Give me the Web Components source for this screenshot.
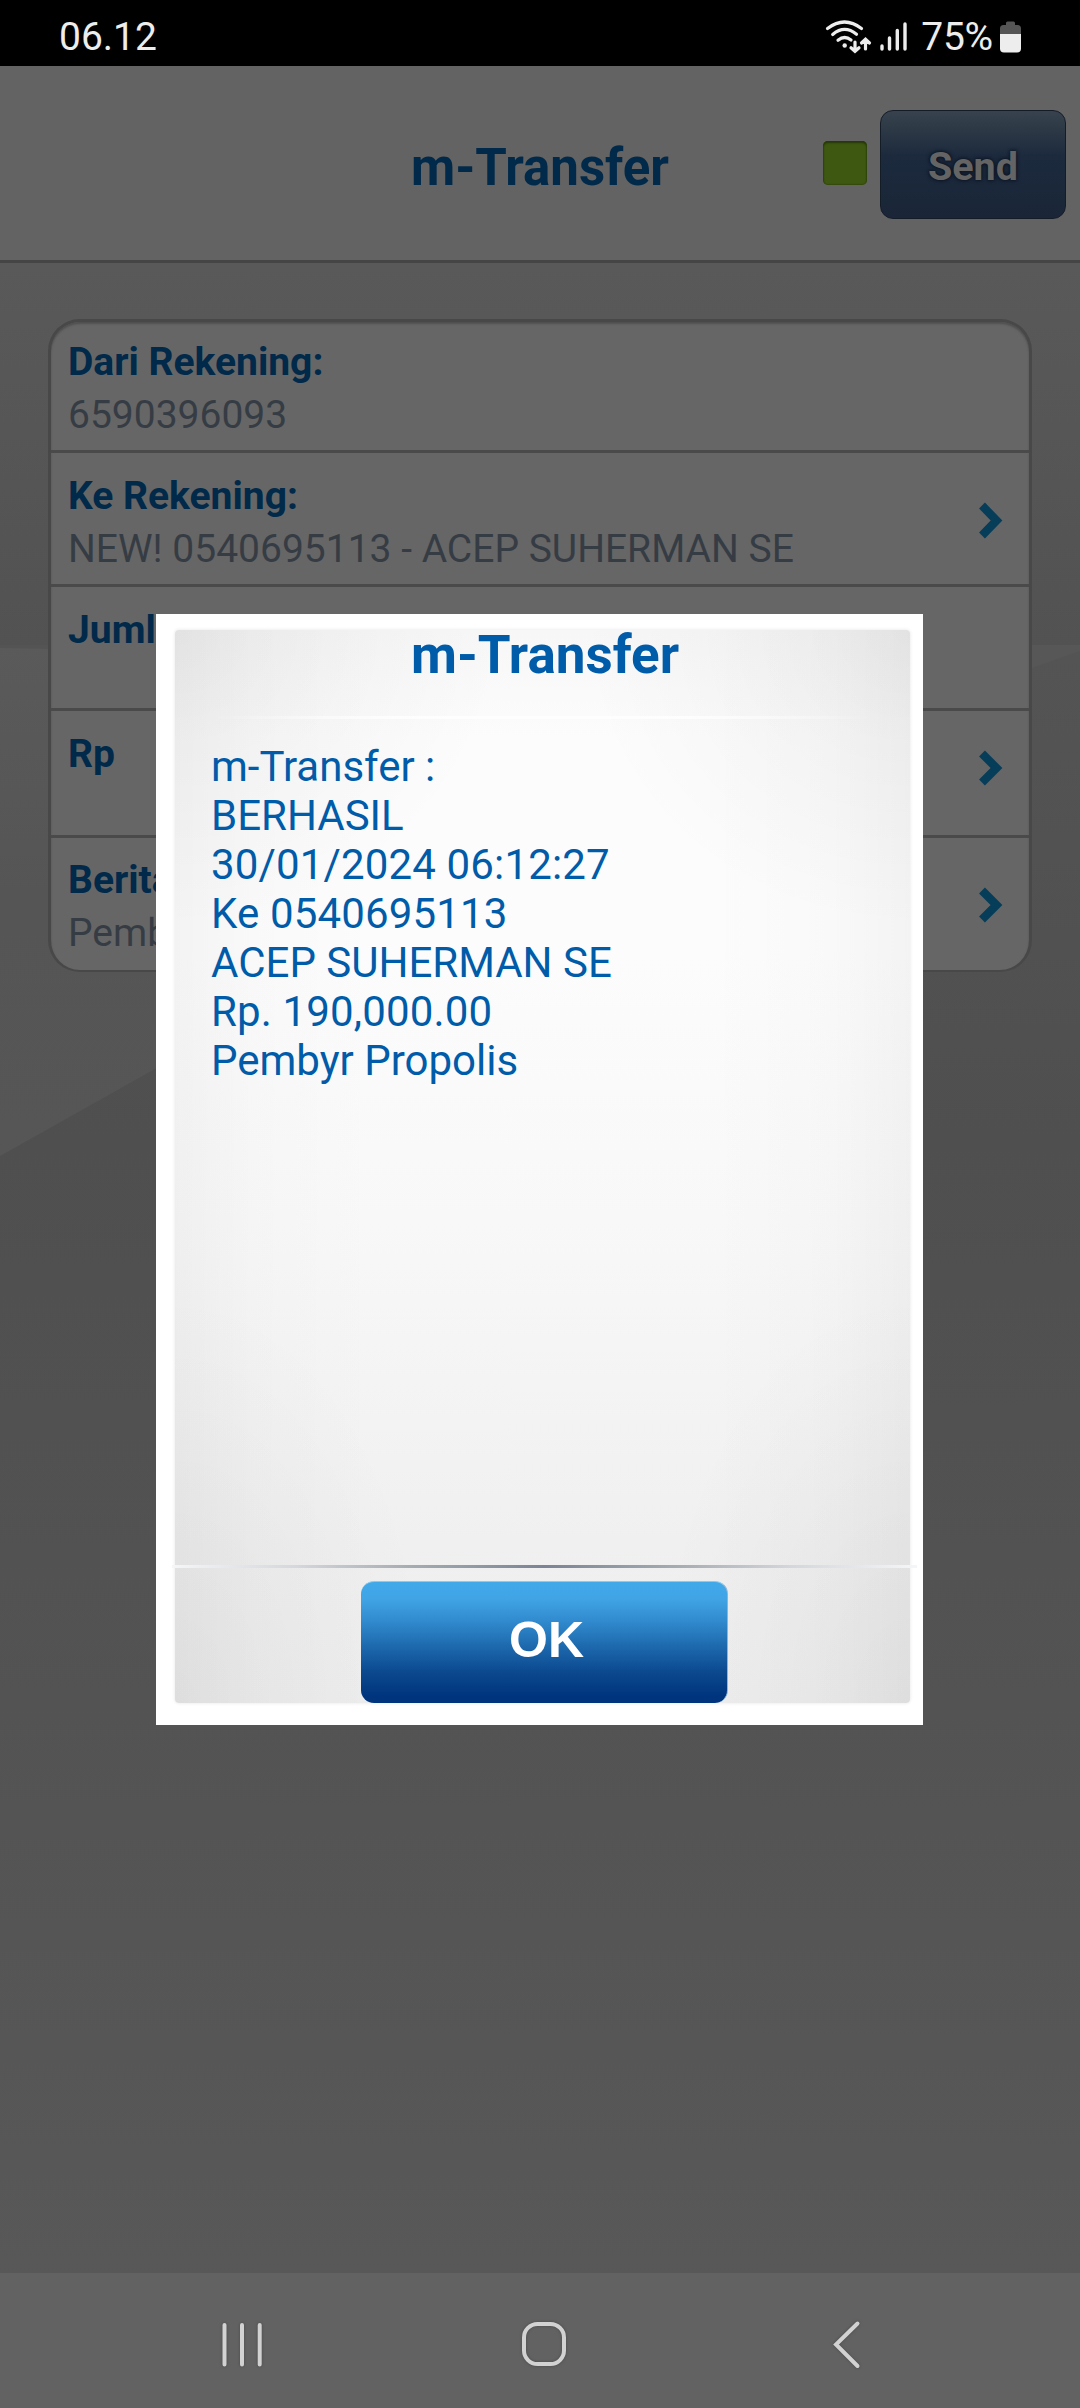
<!DOCTYPE html>
<html lang="id">
<head>
<meta charset="utf-8">
<title>m-Transfer</title>
<style>
html,body{margin:0;padding:0;background:#000}
body{width:1080px;height:2408px;overflow:hidden;font-family:Roboto,"Liberation Sans",sans-serif}
</style>
</head>
<body>
<bank-screen></bank-screen>
<script>
function define(name, html){
  customElements.define(name, class extends HTMLElement{
    constructor(){
      super();
      const t=document.createElement('template');
      t.innerHTML=html;
      this.attachShadow({mode:'open'}).appendChild(t.content.cloneNode(true));
    }
  });
}

define('status-bar', `
<style>
:host{display:flex;height:66px;box-sizing:border-box;background:#000;color:#ededed;align-items:flex-start;justify-content:space-between;padding:0 59px 0 59px;font-size:39px;line-height:46px}
span{display:block;padding-top:14px}
.r{display:flex;align-items:flex-start}
svg{display:block;flex:none}
.p{padding-left:13px;letter-spacing:-.2px}
.b{margin:21px 0 0 7px}
</style>
<span>06.12</span>
<div class="r">
<svg width="86" height="66" viewBox="822 0 86 66" fill="none" stroke="#ededed" stroke-width="3.2" stroke-linecap="round">
<path d="M827.5 28.5Q844.500 15.500 861.5 28.500"/><path d="M832.700 34.500Q844.500 24.500 856.500 34.300"/><path d="M838 40.300Q844.500 34.800 851 40"/>
<circle cx="844.700" cy="45.500" r="2.200" fill="#ededed" stroke="none"/>
<path d="M855 42V50.500M851 47.800L855 51.400L859 47.800M865.500 49V40.500M861.500 43L865.500 39.300L869.500 43"/>
<g stroke-width="3.400"><path d="M882 46V49M889.500 38V49M897.300 30.500V49M905 24V49"/></g></svg>
<span class="p">75%</span>
<svg class="b" width="21" height="32" viewBox="0 0 21 32"><path d="M6 4V2Q6 .5 7.500 .5H13.500Q15 .5 15 2V4H17.500Q21 4 21 7.500V14H0V7.500Q0 4 3.500 4Z" fill="#555"/><path d="M0 13H21V27.500Q21 31.500 17 31.500H4Q0 31.500 0 27.500Z" fill="#ededed"/></svg>
</div>`);

define('top-bar', `
<style>
:host{display:grid;grid-template-columns:411px 1fr auto auto;height:197px;box-sizing:border-box;border-bottom:3px solid #454545;background:#636363}
h1{margin:0;grid-column:2;font-size:51px;line-height:60px;color:#00294a;font-weight:700;padding-top:72px;white-space:nowrap}
.led{width:44px;height:44px;box-sizing:border-box;margin:75px 13px 0 0;border-radius:5px;background:#3e5811;box-shadow:inset 0 2px 2px #25380a,inset 0 0 1px 1px #334b0c}
button{font:700 39.5px/46px Roboto,sans-serif;width:186px;height:109px;margin:44px 14px 0 0;padding:4px 0 0 0;border:1px solid #141c28;border-radius:13px;background:linear-gradient(#37424e 0%,#2b3744 20%,#1c2a3e 42%,#1a2637 100%);color:#646464;text-shadow:0 0 3px #0b1320,0 0 4px #0b1320}
</style>
<h1>m-Transfer</h1><div class="led"></div><button>Send</button>`);

define('form-row', `
<style>
:host{display:flex;box-sizing:border-box;justify-content:space-between;padding:0 25px 0 17px;border-bottom:3px solid #4a4a4a;color:#363c44;font-size:39px;line-height:53px}
:host([last]){border-bottom:0}
.l{display:block;color:#00294a;font-weight:700;white-space:nowrap}
.v{display:block;white-space:nowrap}
.t{padding-top:var(--t,17px)}
svg{display:none;flex:none;width:26px;height:var(--ch,36px);margin-top:var(--c,48px)}
:host([link]) svg{display:block}
</style>
<div class="t"><slot name="label" class="l"></slot><slot class="v"></slot></div>
<svg viewBox="0 0 26 36" preserveAspectRatio="none"><path d="M4 3.500L18.500 18L4 32.500" fill="none" stroke="#063d58" stroke-width="8.300"/></svg>`);

define('form-card', `
<style>
:host{display:block;box-sizing:border-box;width:984px;height:653px;margin:56px 0 0 48px;background:#666;border:3px solid #484848;border-bottom-width:2px;border-radius:32px;box-shadow:inset 0 2px 2px #505050;overflow:hidden}
form-row:nth-of-type(1){height:131px;--t:14px}
form-row:nth-of-type(2){height:134px;--t:17px;--c:49px;--ch:37px}
form-row:nth-of-type(3){height:124px;--t:17px}
form-row:nth-of-type(4){height:127px;--t:17px;--c:39px}
form-row:nth-of-type(5){height:132px;--t:16px;--c:49px}
</style>
<form-row><span slot="label">Dari Rekening:</span>6590396093</form-row>
<form-row link><span slot="label">Ke Rekening:</span>NEW! 0540695113 - ACEP SUHERMAN SE</form-row>
<form-row><span slot="label">Jumlah</span></form-row>
<form-row link><span slot="label">Rp</span></form-row>
<form-row link last><span slot="label">Berita:</span>Pembyr Propolis</form-row>`);

define('page-backdrop', `
<style>:host{display:block;position:absolute;inset:0;z-index:-1}svg{display:block}</style>
<svg width="1080" height="2010" viewBox="0 263 1080 2010">
<defs>
<linearGradient id="a" x1="0" y1="263" x2="0" y2="650" gradientUnits="userSpaceOnUse"><stop offset="0" stop-color="#595959"/><stop offset="1" stop-color="#525252"/></linearGradient>
<linearGradient id="b" x1="0" y1="640" x2="0" y2="1150" gradientUnits="userSpaceOnUse"><stop offset="0" stop-color="#5a5a5a"/><stop offset=".5" stop-color="#555"/><stop offset="1" stop-color="#565656"/></linearGradient>
<linearGradient id="c" x1="0" y1="650" x2="0" y2="2273" gradientUnits="userSpaceOnUse"><stop offset="0" stop-color="#545454"/><stop offset=".12" stop-color="#525252"/><stop offset=".3" stop-color="#4f4f4f"/><stop offset=".65" stop-color="#535353"/><stop offset="1" stop-color="#585858"/></linearGradient>
</defs>
<rect y="263" width="1080" height="2010" fill="url(#c)"/>
<path d="M0 263H1080V645H0Z" fill="url(#a)"/>
<path d="M1032 645H1080V651L1032 668Z" fill="#575757"/>
<path d="M0 648Q80 648 160 660V1066L0 1156Z" fill="url(#b)"/>
</svg>`);

define('transfer-page', `
<style>:host{display:block;position:relative;height:2010px;z-index:0;overflow:hidden}form-card{position:relative}</style>
<page-backdrop></page-backdrop><form-card></form-card>`);

define('nav-bar', `
<style>
:host{display:flex;height:135px;box-sizing:border-box;background:#626262;justify-content:space-between;padding:45px 215px 0 217px}
svg{display:block;filter:drop-shadow(0 0 1.500px #484848)}
.home{margin-right:4px}
path,rect{fill:none;stroke:#d2d2d2;stroke-width:4;stroke-linecap:round}
</style>
<svg width="50" height="54"><path d="M7.500 7V46.500M25 7V46.500M42.700 7V46.500"/></svg>
<svg class="home" width="54" height="54"><rect x="7" y="6" width="40" height="40" rx="13.500"/></svg>
<svg width="40" height="54"><path d="M32.500 5.500L11 26.500L32.500 48"/></svg>`);

define('result-dialog', `
<style>
:host{position:absolute;left:156px;top:614px;width:767px;height:1111px;box-sizing:border-box;background:#fff;padding:16px 13px 22px 19px}
.panel{height:1073px;display:flex;flex-direction:column;align-items:center;border-radius:4px;box-shadow:0 0 3px 1px #f0f0f0;
background:
radial-gradient(ellipse 330px 300px at 0 0,rgba(0,0,0,.05),rgba(0,0,0,.024) 50%,rgba(0,0,0,0)),
radial-gradient(ellipse 330px 300px at 100% 0,rgba(0,0,0,.05),rgba(0,0,0,.024) 50%,rgba(0,0,0,0)),
radial-gradient(ellipse 260px 420px at 0 100%,rgba(0,0,0,.035),rgba(0,0,0,0)),
radial-gradient(ellipse 260px 420px at 100% 100%,rgba(0,0,0,.035),rgba(0,0,0,0)),
linear-gradient(90deg,rgba(0,0,0,.035),rgba(0,0,0,.012) 11%,rgba(0,0,0,0) 28%,rgba(0,0,0,0) 72%,rgba(0,0,0,.012) 89%,rgba(0,0,0,.035)),
linear-gradient(#f7f7f7 0%,#fcfcfc 10%,#fcfcfc 30%,#f8f8f8 55%,#f0f0f0 85%,#eee 100%)}
h2{margin:0;align-self:flex-start;font-size:53px;line-height:60px;color:#005ca9;padding:0 0 0 236px;height:85px;margin-top:-5px;white-space:nowrap}
.hl{height:3px;width:100%;background:linear-gradient(90deg,rgba(255,255,255,0) 5%,rgba(255,255,255,.8) 30%,rgba(255,255,255,.8) 70%,rgba(255,255,255,0) 95%);margin-top:6px}
.body{height:846px;width:100%;box-sizing:border-box;padding:23px 0 0 36px;font-size:42px;line-height:49px;color:#005ca9}
.body ::slotted(div){white-space:nowrap}
.body ::slotted(.num){letter-spacing:.15px}
.fl{flex:none;align-self:flex-start;height:3px;width:745px;margin:0 0 0 -3px;background:linear-gradient(90deg,#f5f6f7,#d3d6dc 17%,#a5acb2 32%,#7b8494 50%,#a5acb2 68%,#d3d6dc 83%,#f5f6f7)}
button{flex:none;align-self:flex-start;margin:13px 0 0 186px;width:367px;height:122px;border:0;border-top:1px solid #8ccbf0;border-right:1px solid #8bb4dc;border-radius:13px;padding:0 0 6px 5px;color:#fff;font:700 50px "Liberation Sans",sans-serif;background:linear-gradient(#42a9e9 0%,#40a4e5 14%,#318bce 32%,#1e69ae 53%,#0b488e 75%,#00357e 94%,#00357e 100%)}
</style>
<section class="panel">
<h2><slot name="title"></slot></h2>
<div class="hl"></div>
<div class="body"><slot></slot></div>
<div class="fl"></div>
<button>OK</button>
</section>`);

define('bank-screen', `
<style>:host{display:flex;flex-direction:column;width:1080px;height:2408px;position:relative}</style>
<status-bar></status-bar><top-bar></top-bar><transfer-page></transfer-page><nav-bar></nav-bar>
<result-dialog><span slot="title">m-Transfer</span>
<div>m-Transfer :</div><div>BERHASIL</div><div class="num">30/01/2024 06:12:27</div><div class="num">Ke 0540695113</div><div>ACEP SUHERMAN SE</div><div class="num">Rp. 190,000.00</div><div>Pembyr Propolis</div>
</result-dialog>`);
</script>
</body>
</html>
